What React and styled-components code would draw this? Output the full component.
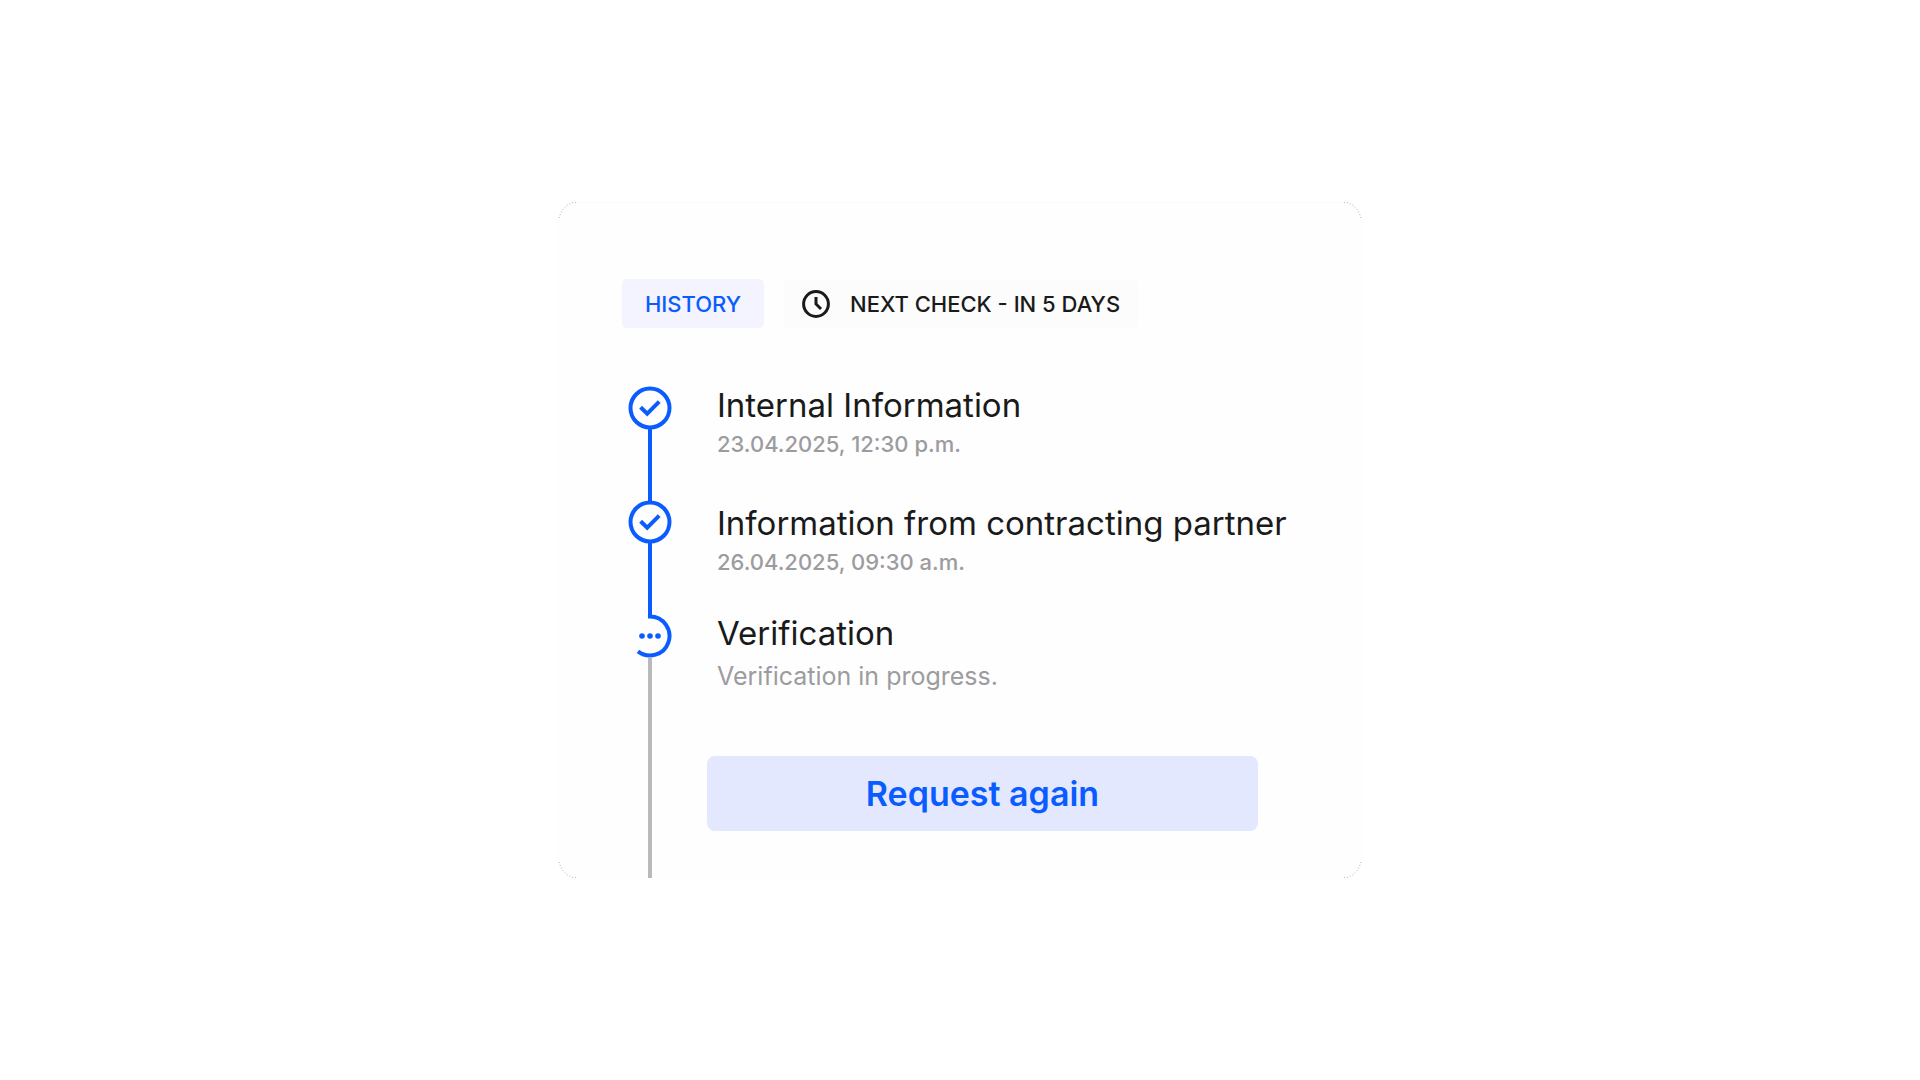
import styled, { createGlobalStyle } from 'styled-components';

const steps = [
  { title: 'Internal Information', date: '23.04.2025, 12:30 p.m.', gap: 44 },
  { title: 'Information from contracting partner', date: '26.04.2025, 09:30 a.m.', gap: 36 },
  { title: 'Verification', note: 'Verification in progress.', gap: 64 },
];

function CheckMarker() {
  return (
    <Marker viewBox="0 0 44 44" aria-hidden="true">
      <circle cx="22" cy="22" r="19.5" />
      <path d="M12.6 21.2L19.2 27.6L31.2 15.6" />
    </Marker>
  );
}

function ProgressMarker() {
  return (
    <Marker viewBox="0 0 44 44" aria-hidden="true">
      <path d="M20 2.5H22A19.5 19.5 0 1 1 10 37.4" />
      <g fill="#0a5cff" stroke="none">
        <circle cx="14" cy="22" r="2.8" />
        <circle cx="22" cy="22" r="2.8" />
        <circle cx="30" cy="22" r="2.8" />
      </g>
    </Marker>
  );
}

function ClockIcon() {
  return (
    <Clock viewBox="0 0 28 28" aria-hidden="true">
      <circle cx="14" cy="14" r="12.4" />
      <path d="M14 7V14L19 19" />
    </Clock>
  );
}

function Corner({ side }) {
  return (
    <CornerMark $side={side} viewBox="0 0 20 20" aria-hidden="true">
      <path d="M1 16C3 8 8 2.5 15 0.5H19" />
    </CornerMark>
  );
}

export default function App() {
  return (
    <Page>
      <GlobalStyle />
      <Card>
        <Corner side="topLeft" />
        <Corner side="topRight" />
        <Corner side="bottomLeft" />
        <Corner side="bottomRight" />
        <Chips>
          <HistoryChip type="button">HISTORY</HistoryChip>
          <CheckChip>
            <ClockIcon />
            NEXT CHECK - IN 5 DAYS
          </CheckChip>
        </Chips>
        <Timeline>
          <Rail>
            <CheckMarker />
            <Line />
            <CheckMarker />
            <Line />
            <ProgressMarker />
            <Line $pending />
          </Rail>
          <Content>
            <Steps>
              {steps.map(step => (
                <Step key={step.title} $gap={step.gap}>
                  <Title>{step.title}</Title>
                  {step.date && <StepDate>{step.date}</StepDate>}
                  {step.note && <Note>{step.note}</Note>}
                </Step>
              ))}
            </Steps>
            <RequestButton type="button">Request again</RequestButton>
          </Content>
        </Timeline>
      </Card>
    </Page>
  );
}

const GlobalStyle = createGlobalStyle`
  * {
    box-sizing: border-box;
  }
  body {
    margin: 0;
    background-color: #ffffff;
    color: #1a1a1a;
    font-family: Inter, 'Liberation Sans', sans-serif;
  }
`;

const Page = styled.main`
  display: flex;
  align-items: center;
  justify-content: center;
  min-height: 100vh;
`;

const Card = styled.section`
  position: relative;
  width: 100%;
  max-width: 804px;
  padding: 77px 48px 0 64px;
  border-radius: 20px;
  background-color: #fefefe;
  box-shadow: inset 0 1px #fafafb;
`;

const corners = {
  topLeft: 'top: 0; left: 0;',
  topRight: 'top: 0; right: 0; transform: scaleX(-1);',
  bottomLeft: 'bottom: 0; left: 0; transform: scaleY(-1);',
  bottomRight: 'bottom: 0; right: 0; transform: scale(-1);',
};

const CornerMark = styled.svg`
  position: absolute;
  ${({ $side }) => corners[$side]}
  width: 20px;
  height: 20px;
  fill: none;
  stroke: #b4b6c8;
  stroke-width: 1;
  stroke-dasharray: 1 2;
`;

const Chips = styled.header`
  display: flex;
  gap: 20px;
`;

const HistoryChip = styled.button`
  width: 142px;
  height: 49px;
  padding: 0;
  border: 0;
  border-radius: 5px;
  background-color: #f3f4ff;
  color: #0a5cff;
  font: 500 22px/32px Inter, 'Liberation Sans', sans-serif;
`;

const CheckChip = styled.div`
  display: flex;
  align-items: center;
  gap: 20px;
  height: 49px;
  padding: 0 18px;
  border-radius: 5px;
  background-color: #fcfcfd;
  font-size: 22px;
  font-weight: 500;
  line-height: 32px;
  white-space: nowrap;
`;

const Clock = styled.svg`
  width: 28px;
  height: 28px;
  fill: none;
  stroke: #1a1a1a;
  stroke-width: 3;
`;

const Timeline = styled.div`
  display: flex;
  gap: 35px;
  margin-top: 58px;
  padding-left: 6px;
`;

const Rail = styled.div`
  display: flex;
  flex-direction: column;
  align-items: center;
`;

const Marker = styled.svg`
  width: 44px;
  height: 44px;
  fill: none;
  stroke: #0a5cff;
  stroke-width: 4;
`;

const Line = styled.div`
  width: 4px;
  height: 72px;
  margin: -1px 0;
  background-color: #0a5cff;
  ${({ $pending }) => $pending && `
    flex: 1;
    margin: 0;
    background-color: #b7b9bb;
  `}
`;

const Content = styled.div`
  flex: 1;
  padding-bottom: 47px;
`;

const Steps = styled.ol`
  margin: 0;
  padding: 0 0 0 10px;
  list-style: none;
`;

const Step = styled.li`
  padding-bottom: ${({ $gap }) => $gap}px;
`;

const Title = styled.h2`
  margin: 0;
  font-size: 33px;
  font-weight: 400;
  line-height: 38px;
`;

const StepDate = styled.time`
  display: block;
  margin-top: 4px;
  color: #9c9c9e;
  font-size: 22px;
  font-weight: 500;
  line-height: 32px;
`;

const Note = styled.p`
  margin: 8px 0 0;
  color: #9c9c9e;
  font-size: 25px;
  line-height: 32px;
`;

const RequestButton = styled.button`
  width: 100%;
  max-width: 551px;
  height: 75px;
  border: 0;
  border-radius: 8px;
  background-color: #e3e8ff;
  color: #0a5cff;
  font: 600 34px/38px Inter, 'Liberation Sans', sans-serif;
`;
